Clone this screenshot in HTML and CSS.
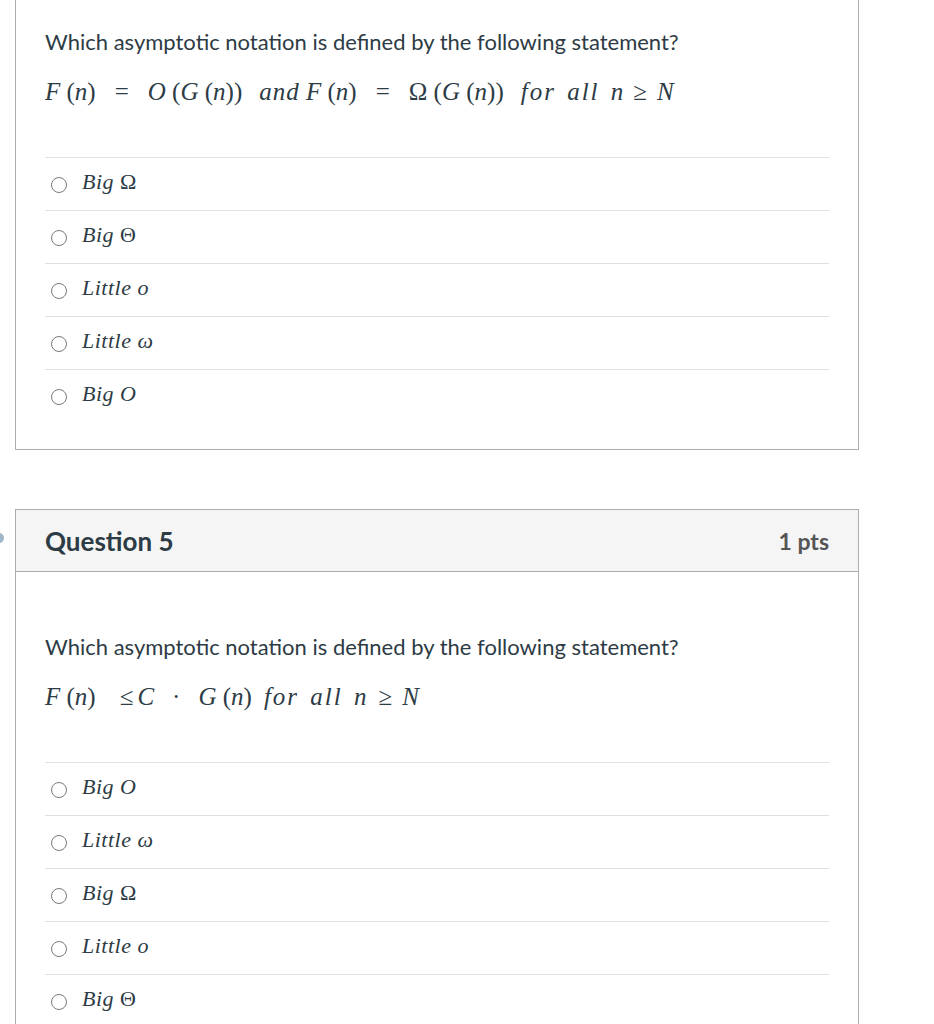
FILE: index.html
```html
<!DOCTYPE html>
<html lang="en">
<head>
<meta charset="utf-8">
<title>Quiz</title>
<link rel="stylesheet" href="styles.css">
</head>
<body>
<div class="page">
  <section class="card card-cut">
    <div class="qbody">
      <p class="qtext">Which asymptotic notation is defined by the following statement?</p>
      <p class="math"><var>F</var> (<var>n</var>)<span class="eq">=</span><var>O</var> (<var>G</var> (<var>n</var>))<span class="gap"></span><var class="and">and</var> <var>F</var> (<var>n</var>)<span class="eq">=</span>Ω (<var>G</var> (<var>n</var>))<span class="gap"></span><var class="w">for</var> <var class="w">all</var> <var>n</var><span class="ineq">≥</span><var>N</var></p>
    </div>
    <ul class="answers">
      <li class="answer"><span class="radio"></span><span class="opt">Big <span class="up">Ω</span></span></li>
      <li class="answer"><span class="radio"></span><span class="opt">Big <span class="up">Θ</span></span></li>
      <li class="answer"><span class="radio"></span><span class="opt">Little o</span></li>
      <li class="answer"><span class="radio"></span><span class="opt">Little ω</span></li>
      <li class="answer"><span class="radio"></span><span class="opt">Big O</span></li>
    </ul>
  </section>

  <section class="card">
    <span class="nav-arrow"></span>
    <header class="qhead">
      <h2 class="qtitle">Question 5</h2>
      <span class="pts">1 pts</span>
    </header>
    <div class="qbody">
      <p class="qtext">Which asymptotic notation is defined by the following statement?</p>
      <p class="math"><var>F</var> (<var>n</var>)<span class="ineq ineq-l">≤</span><var>C</var><span class="dot">·</span><var>G</var> (<var>n</var>)<span class="gap2"></span><var class="w">for</var> <var class="w">all</var> <var>n</var><span class="ineq ineq-2">≥</span><var>N</var></p>
    </div>
    <ul class="answers">
      <li class="answer"><span class="radio"></span><span class="opt">Big O</span></li>
      <li class="answer"><span class="radio"></span><span class="opt">Little ω</span></li>
      <li class="answer"><span class="radio"></span><span class="opt">Big <span class="up">Ω</span></span></li>
      <li class="answer"><span class="radio"></span><span class="opt">Little o</span></li>
      <li class="answer"><span class="radio"></span><span class="opt">Big <span class="up">Θ</span></span></li>
    </ul>
  </section>
</div>
</body>
</html>
```
FILE: styles.css
```css
html {
  overflow: hidden;
}
body {
  margin: 0;
  background: #ffffff;
  font-family: Lato, "Noto Sans", sans-serif;
  color: #2d3b45;
}
.page {
  padding-left: 15px;
  width: 844px;
}
.card {
  position: relative;
  border: 1px solid #adadad;
  background: #ffffff;
  padding-bottom: 27px;
}
.card-cut {
  border-top: none;
  margin-bottom: 59px;
}
.qhead {
  display: flex;
  justify-content: space-between;
  align-items: center;
  height: 61px;
  padding: 0 29px 0 29px;
  background: #f5f5f5;
  border-bottom: 1px solid #adadad;
}
.qtitle {
  margin: 0;
  font-size: 26px;
  font-weight: 700;
  color: #2d3b45;
}
.pts {
  font-size: 23px;
  font-weight: 700;
  color: #555555;
}
.nav-arrow {
  position: absolute;
  left: -22px;
  top: 23px;
  width: 10px;
  height: 10px;
  border-radius: 50%;
  background: #9fb6c8;
}
.qbody {
  padding: 60px 29px 0 29px;
}
.card-cut .qbody {
  padding-top: 27px;
}
.qtext {
  margin: 0 0 20px;
  font-size: 22px;
  line-height: 30px;
}
.math {
  margin: 0;
  font-family: "Liberation Serif", "Times New Roman", serif;
  font-size: 25px;
  line-height: 30px;
  color: #2d3b45;
  white-space: nowrap;
}
.math var {
  font-style: italic;
}
.math .w {
  letter-spacing: 2px;
  margin-right: 5px;
}
.math .and {
  letter-spacing: 1px;
}
.eq {
  margin: 0 19px;
}
.ineq {
  margin: 0 10px 0 10px;
}
.ineq-l {
  margin: 0 4px 0 24px;
}
.ineq-2 {
  margin: 0 10px 0 12px;
}
.dot {
  margin: 0 18px;
}
.gap {
  display: inline-block;
  width: 17px;
}
.gap2 {
  display: inline-block;
  width: 12px;
}
.answers {
  list-style: none;
  margin: 50px 29px 0 29px;
  padding: 0;
}
.answer {
  display: flex;
  align-items: center;
  height: 52px;
  border-top: 1px solid #e0e0e0;
}
.radio {
  box-sizing: border-box;
  width: 16px;
  height: 16px;
  margin: 2px 15px 0 6px;
  border: 1.5px solid #7a7a7a;
  border-radius: 50%;
  flex: none;
}
.opt {
  font-family: "Liberation Serif", "Times New Roman", serif;
  font-style: italic;
  font-size: 22px;
  line-height: 1;
  padding-bottom: 4px;
  letter-spacing: 0.5px;
  color: #2d3b45;
}
.opt .up {
  font-style: normal;
}
```
